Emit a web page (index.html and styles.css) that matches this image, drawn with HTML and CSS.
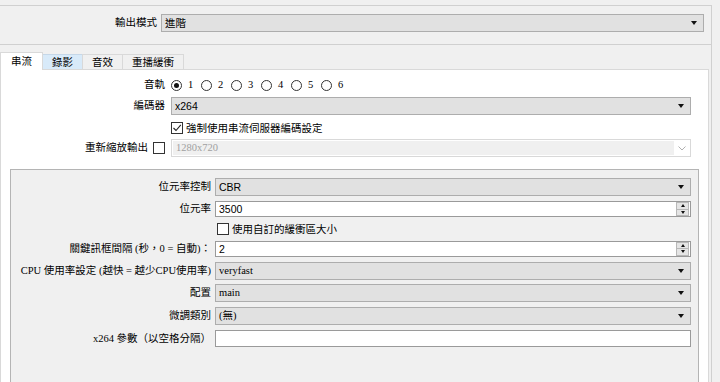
FILE: index.html
```html
<!DOCTYPE html>
<html lang="zh-Hant">
<head>
<meta charset="utf-8">
<title>輸出設定</title>
<link rel="stylesheet" href="styles.css">
</head>
<body>
<div class="frame">
  <div class="mode-row">
    <span class="mode-label">輸出模式</span>
    <div class="combo combo-mode"><span class="cjk">進階</span><i class="arrow"></i></div>
  </div>
  <div class="tabs-area">
    <div class="tabbar">
      <div class="tab active">串流</div>
      <div class="tab hover">錄影</div>
      <div class="tab">音效</div>
      <div class="tab">重播緩衝</div>
    </div>
    <div class="panel">
      <div class="form-top">
        <span class="lbl">音軌</span>
        <div class="radios">
          <span class="radio-item"><i class="radio on"></i>1</span>
          <span class="radio-item"><i class="radio"></i>2</span>
          <span class="radio-item"><i class="radio"></i>3</span>
          <span class="radio-item"><i class="radio"></i>4</span>
          <span class="radio-item"><i class="radio"></i>5</span>
          <span class="radio-item"><i class="radio"></i>6</span>
        </div>

        <span class="lbl">編碼器</span>
        <div class="combo"><span class="sans">x264</span><i class="arrow"></i></div>

        <span class="lbl"></span>
        <label class="checkline"><i class="check">
          <svg width="10" height="10" viewBox="0 0 10 10"><polyline points="1.5,5 4,7.5 8.8,1.8" fill="none" stroke="#222" stroke-width="1.1"/></svg>
        </i>強制使用串流伺服器編碼設定</label>

        <span class="lbl lbl-check">重新縮放輸出<i class="check"></i></span>
        <div class="combo-disabled"><span class="value">1280x720</span><span class="chev"><svg width="8" height="5" viewBox="0 0 8 5"><polyline points="0.5,0.5 4,4 7.5,0.5" fill="none" stroke="#b0b0b0" stroke-width="1"/></svg></span></div>
      </div>

      <div class="group">
        <span class="lbl">位元率控制</span>
        <div class="combo"><span class="sans">CBR</span><i class="arrow"></i></div>

        <span class="lbl">位元率</span>
        <div class="spin"><span class="sans">3500</span><span class="spin-btns"><i class="sb up"></i><i class="sb down"></i></span></div>

        <span class="lbl"></span>
        <label class="checkline checkline-g"><i class="check"></i>使用自訂的緩衝區大小</label>

        <span class="lbl">關鍵訊框間隔 (秒，0 = 自動)：</span>
        <div class="spin"><span class="sans">2</span><span class="spin-btns"><i class="sb up"></i><i class="sb down"></i></span></div>

        <span class="lbl">CPU 使用率設定 (越快 = 越少CPU使用率)</span>
        <div class="combo"><span>veryfast</span><i class="arrow"></i></div>

        <span class="lbl">配置</span>
        <div class="combo"><span>main</span><i class="arrow"></i></div>

        <span class="lbl">微調類別</span>
        <div class="combo"><span>(無)</span><i class="arrow"></i></div>

        <span class="lbl">x264 參數（以空格分隔）</span>
        <div class="textbox"></div>
      </div>
    </div>
  </div>
</div>
</body>
</html>
```
FILE: styles.css
```css
* { box-sizing: border-box; }
html, body { margin: 0; height: 100%; overflow: hidden; }
body {
  background: #f0f0f0;
  font-family: "Liberation Serif", "Noto Sans CJK TC", serif;
  font-size: 10.5px;
  color: #000;
}
i { font-style: normal; }
.sans { font-family: "Liberation Sans", "Noto Sans CJK TC", sans-serif; }
.cjk { font-family: "Noto Sans CJK TC", sans-serif; }

.frame {
  margin-top: 5px;
  width: 712px;
  height: 377px;
  border-top: 1px solid #d0d0d0;
  border-right: 1px solid #d0d0d0;
}

.mode-row {
  display: flex;
  align-items: flex-start;
  height: 39px;
  padding-top: 8px;
  border-bottom: 1px solid #d0d0d0;
}
.mode-label {
  width: 157px;
  text-align: right;
  line-height: 18px;
}
.combo-mode { margin-left: 4px; width: 543px; padding-left: 4px; }

.tabs-area { padding-top: 7px; }
.tabbar {
  display: flex;
  align-items: flex-end;
  height: 17px;
  position: relative;
  z-index: 1;
}
.tab {
  height: 15px;
  padding: 0 9px;
  margin-left: -1px;
  border: 1px solid #d9d9d9;
  border-bottom: none;
  background: #f0f0f0;
  line-height: 14px;
  font-family: "Noto Sans CJK TC", sans-serif;
}
.tab.hover { background: #d8eaf9; border-color: #c5d7e8; }
.tab.active {
  height: 18px;
  margin-left: 0;
  margin-bottom: -1px;
  padding: 0 10px;
  background: #fff;
  line-height: 15px;
  position: relative;
  z-index: 2;
}

.panel {
  width: 709px;
  height: 320px;
  border: 1px solid #d9d9d9;
  background: #fff;
  padding-top: 4px;
}

.form-top {
  display: grid;
  grid-template-columns: 164px 520px;
  grid-template-rows: 22px 20px 23px 18px;
  column-gap: 6px;
  align-items: center;
}
.lbl {
  text-align: right;
  white-space: nowrap;
  line-height: 14px;
}
.lbl-check {
  display: flex;
  justify-content: flex-end;
  align-items: center;
  gap: 5px;
  padding-right: 0;
}

.radios { display: flex; align-items: center; }
.radio-item {
  width: 30px;
  display: flex;
  align-items: center;
  gap: 6px;
  line-height: 12px;
}
.radio {
  width: 11px;
  height: 11px;
  border: 1px solid #333;
  border-radius: 50%;
  background: #fff;
  display: flex;
  align-items: center;
  justify-content: center;
}
.radio.on::after {
  content: "";
  width: 5px;
  height: 5px;
  border-radius: 50%;
  background: #111;
}

.check {
  width: 12px;
  height: 12px;
  border: 1px solid #333;
  background: #fff;
  display: inline-flex;
  align-items: center;
  justify-content: center;
  flex: none;
}
.checkline {
  display: flex;
  align-items: center;
  gap: 3px;
  font-family: "Noto Sans CJK TC", sans-serif;
  line-height: 14px;
}
.checkline-g { margin-left: 2px; }

.combo {
  height: 18px;
  border: 1px solid #adadad;
  background: #e1e1e1;
  display: flex;
  align-items: center;
  padding-left: 3px;
  line-height: 14px;
}
.arrow {
  margin-left: auto;
  margin-right: 6px;
  width: 0;
  height: 0;
  border-left: 3px solid transparent;
  border-right: 3px solid transparent;
  border-top: 4px solid #111;
}

.combo-disabled {
  height: 18px;
  border: 1px solid #d9d9d9;
  background: #fff;
  padding: 1px;
  display: flex;
}
.combo-disabled .value {
  flex: 1;
  background: #f0f0f0;
  color: #a0a0a0;
  padding-left: 3px;
  line-height: 14px;
}
.chev {
  width: 15px;
  display: flex;
  align-items: center;
  justify-content: center;
}

.group {
  margin: 12px 0 0 9px;
  width: 689px;
  height: 230px;
  border: 1px solid #b4b4b4;
  background: #f0f0f0;
  padding: 6px 7px 0 0;
  display: grid;
  grid-template-columns: 200px 476px;
  grid-template-rows: 22px 22px 17px 23px 22px 22px 23px 23px;
  column-gap: 4px;
  align-content: start;
  align-items: center;
}

.spin {
  height: 16px;
  border: 1px solid #9a9a9a;
  background: #fff;
  display: flex;
  align-items: center;
  padding-left: 3px;
  line-height: 14px;
}
.spin-btns {
  margin-left: auto;
  margin-right: 1px;
  width: 13px;
  height: 14px;
  display: flex;
  flex-direction: column;
}
.sb {
  flex: 1;
  background: #e5e5e5;
  border: 1px solid #b8b8b8;
  display: flex;
  align-items: center;
  justify-content: center;
}
.sb + .sb { border-top: none; }
.sb.up::after {
  content: "";
  border-left: 2.5px solid transparent;
  border-right: 2.5px solid transparent;
  border-bottom: 3px solid #111;
}
.sb.down::after {
  content: "";
  border-left: 2.5px solid transparent;
  border-right: 2.5px solid transparent;
  border-top: 3px solid #111;
}

.textbox {
  height: 17px;
  border: 1px solid #9a9a9a;
  background: #fff;
}
```
